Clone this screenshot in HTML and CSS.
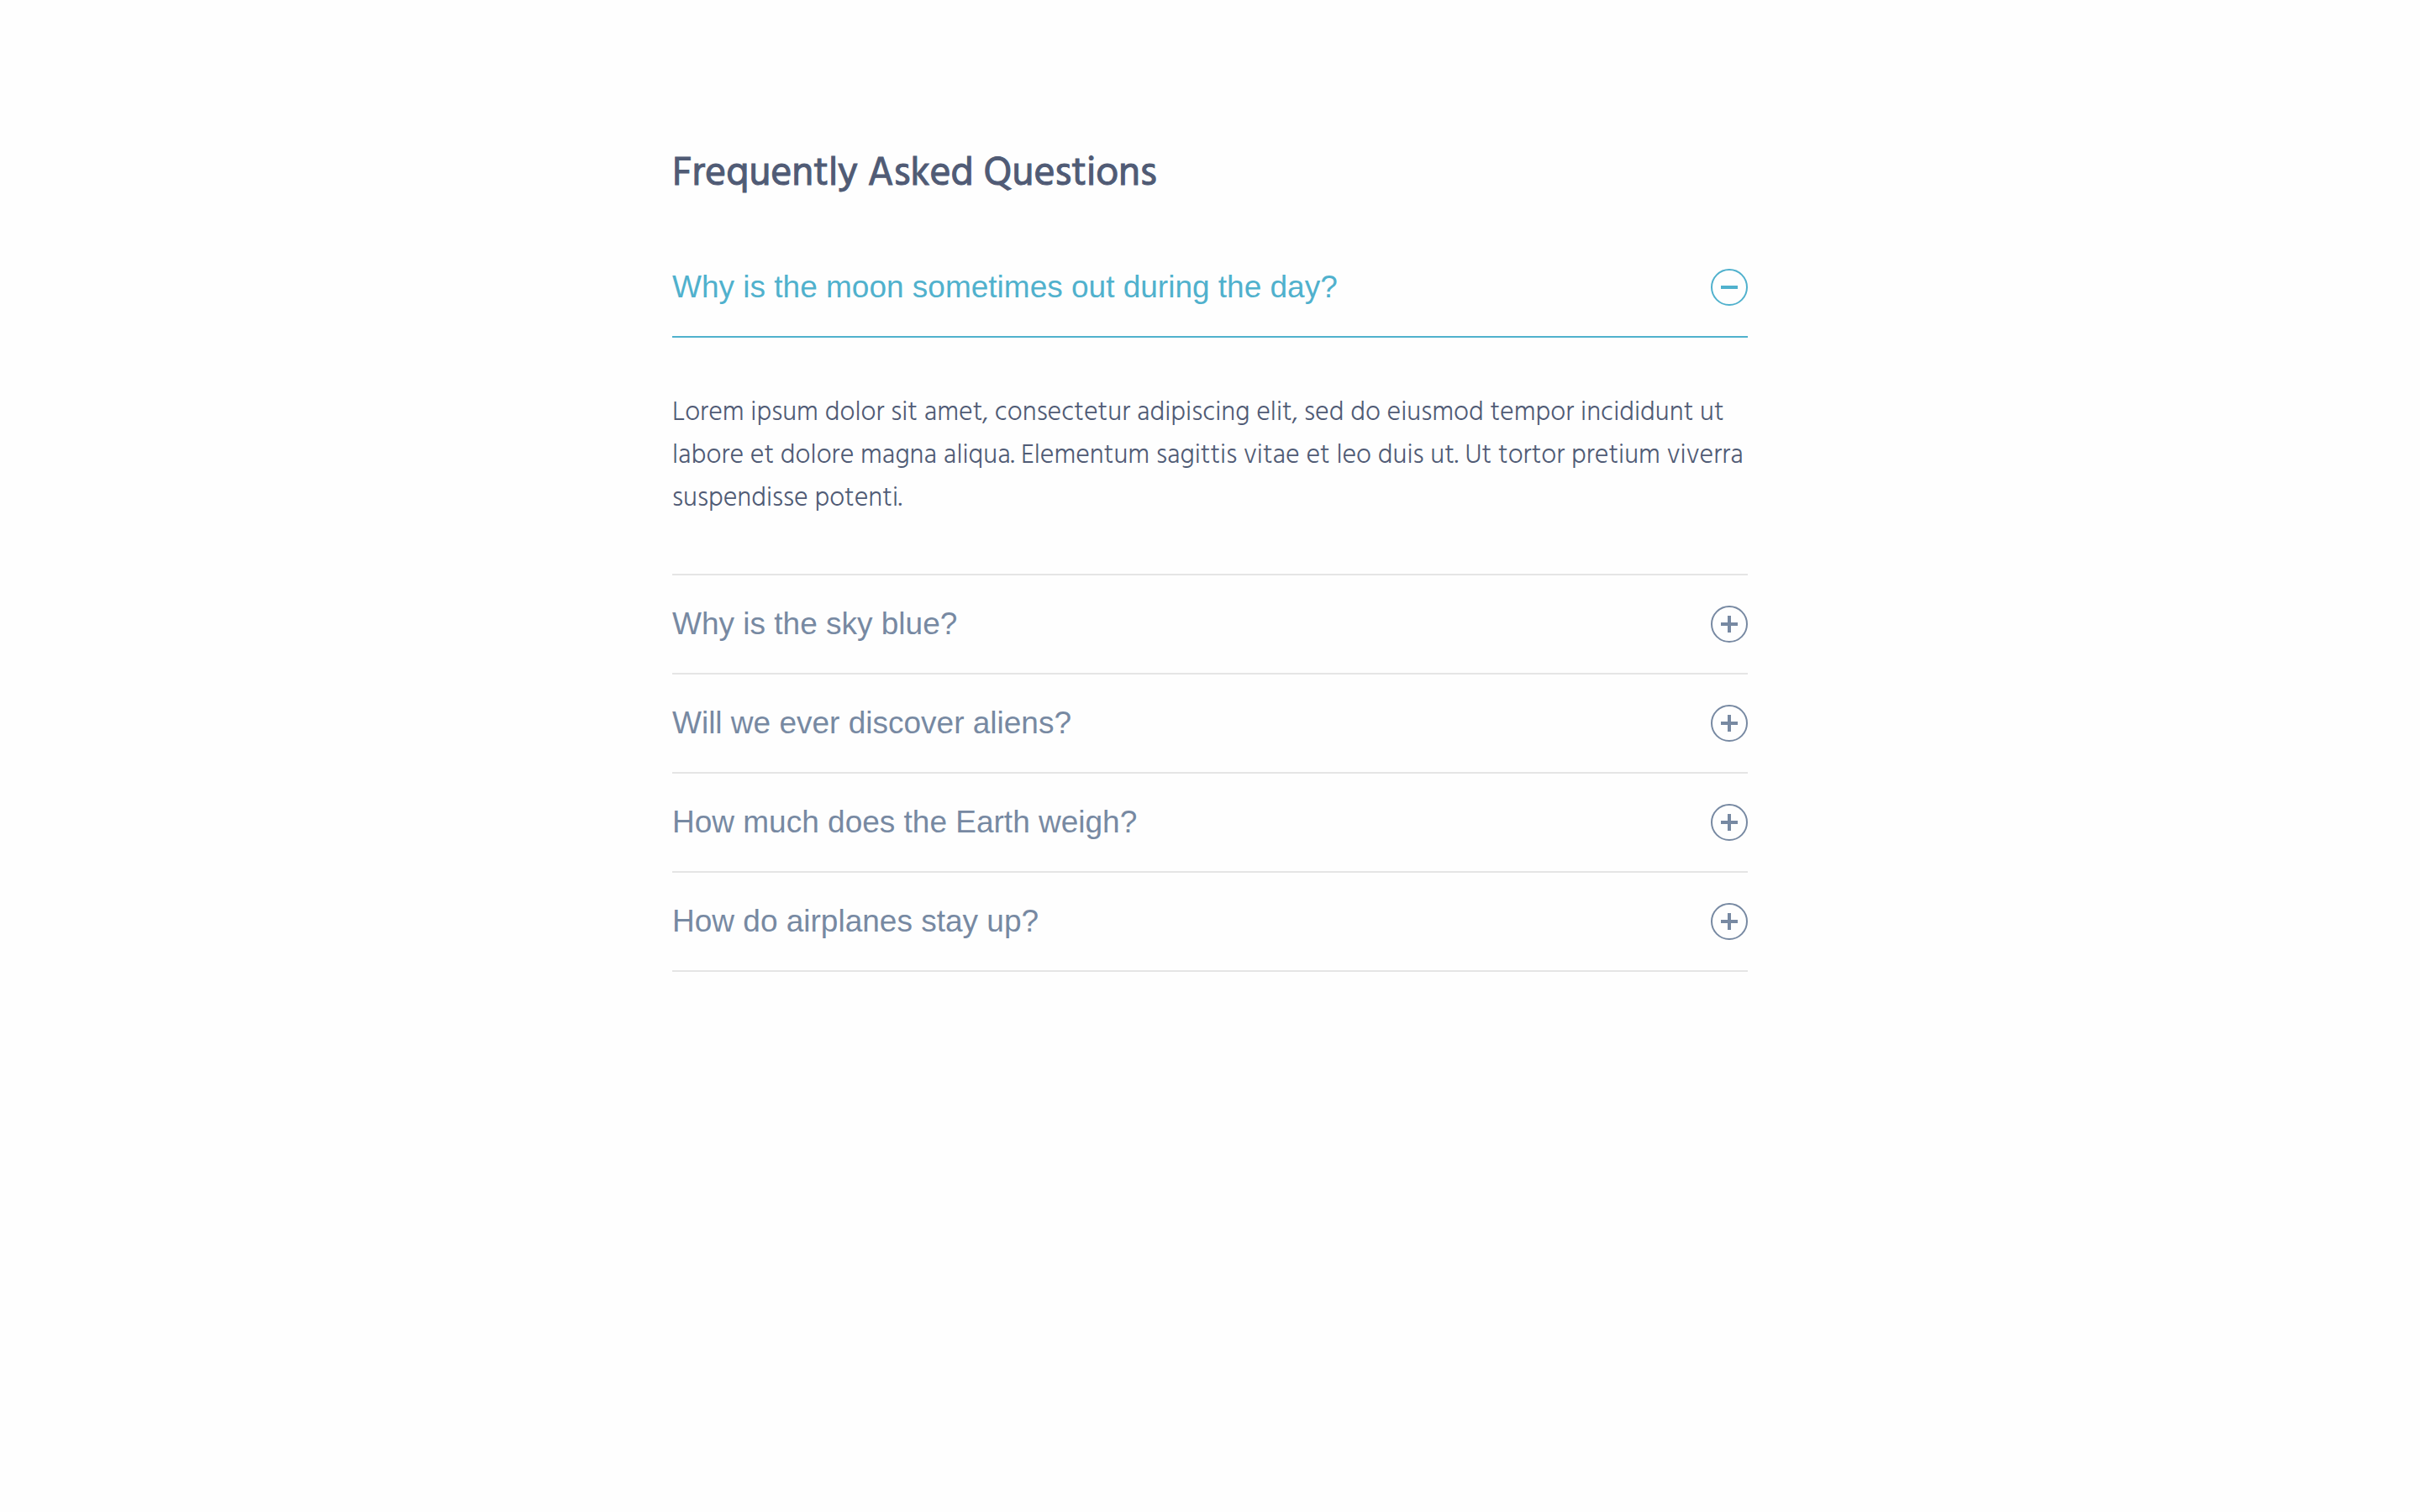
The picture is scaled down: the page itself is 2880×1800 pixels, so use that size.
FILE: index.html
```html
<!DOCTYPE html>
<html lang="en">
<head>
<meta charset="utf-8">
<meta name="viewport" content="width=device-width, initial-scale=1">
<title>Frequently Asked Questions</title>
<link rel="stylesheet" href="styles.css">
</head>
<body>
<main class="container">
  <h1 class="title">Frequently Asked Questions</h1>
  <div class="accordion">
    <section class="item">
      <button class="question" type="button" aria-expanded="true" aria-controls="answer-1">
        <span>Why is the moon sometimes out during the day?</span>
        <svg class="icon" viewBox="0 0 44 44" aria-hidden="true"><circle cx="22" cy="22" r="21"/><path d="M12 22h20"/></svg>
      </button>
      <div class="answer" id="answer-1">
        <p>Lorem ipsum dolor sit amet, consectetur adipiscing elit, sed do eiusmod tempor incididunt ut labore et dolore magna aliqua. Elementum sagittis vitae et leo duis ut. Ut tortor pretium viverra suspendisse potenti.</p>
      </div>
    </section>
    <section class="item">
      <button class="question" type="button" aria-expanded="false">
        <span>Why is the sky blue?</span>
        <svg class="icon" viewBox="0 0 44 44" aria-hidden="true"><circle cx="22" cy="22" r="21"/><path d="M12 22h20M22 12v20"/></svg>
      </button>
    </section>
    <section class="item">
      <button class="question" type="button" aria-expanded="false">
        <span>Will we ever discover aliens?</span>
        <svg class="icon" viewBox="0 0 44 44" aria-hidden="true"><circle cx="22" cy="22" r="21"/><path d="M12 22h20M22 12v20"/></svg>
      </button>
    </section>
    <section class="item">
      <button class="question" type="button" aria-expanded="false">
        <span>How much does the Earth weigh?</span>
        <svg class="icon" viewBox="0 0 44 44" aria-hidden="true"><circle cx="22" cy="22" r="21"/><path d="M12 22h20M22 12v20"/></svg>
      </button>
    </section>
    <section class="item">
      <button class="question" type="button" aria-expanded="false">
        <span>How do airplanes stay up?</span>
        <svg class="icon" viewBox="0 0 44 44" aria-hidden="true"><circle cx="22" cy="22" r="21"/><path d="M12 22h20M22 12v20"/></svg>
      </button>
    </section>
  </div>
</main>
</body>
</html>
```
FILE: styles.css
```css
* {
  box-sizing: border-box;
}

body {
  margin: 0;
  background: #fefefe;
  color: #505b75;
  font-family: Hind, "Noto Sans CJK SC", "Noto Sans", sans-serif;
}

.container {
  max-width: 1408px;
  margin: 0 auto;
  padding: 168px 64px 64px;
}

.title {
  margin: 0 0 36px;
  font-size: 48px;
  font-weight: 400;
  line-height: 80px;
  -webkit-text-stroke: 1px currentColor;
}

.question {
  display: flex;
  align-items: center;
  justify-content: space-between;
  gap: 32px;
  width: 100%;
  padding: 36px 0;
  border: 0;
  border-bottom: 2px solid #e5e5e5;
  background: none;
  color: #7789a2;
  font-family: "Liberation Sans", Arial, sans-serif;
  font-size: 37px;
  line-height: 44px;
  text-align: left;
  cursor: pointer;
}

.question:hover,
.question[aria-expanded="true"] {
  color: #50b1cd;
  border-bottom-color: #50b1cd;
}

.icon {
  flex: none;
  width: 44px;
  height: 44px;
  fill: none;
  stroke: currentColor;
  stroke-width: 2;
}

.icon path {
  stroke-width: 4;
}

.answer {
  padding: 64px 0;
  border-bottom: 2px solid #e5e5e5;
}

.answer p {
  margin: 0;
  font-size: 32px;
  font-weight: 300;
  line-height: 51px;
}
```
